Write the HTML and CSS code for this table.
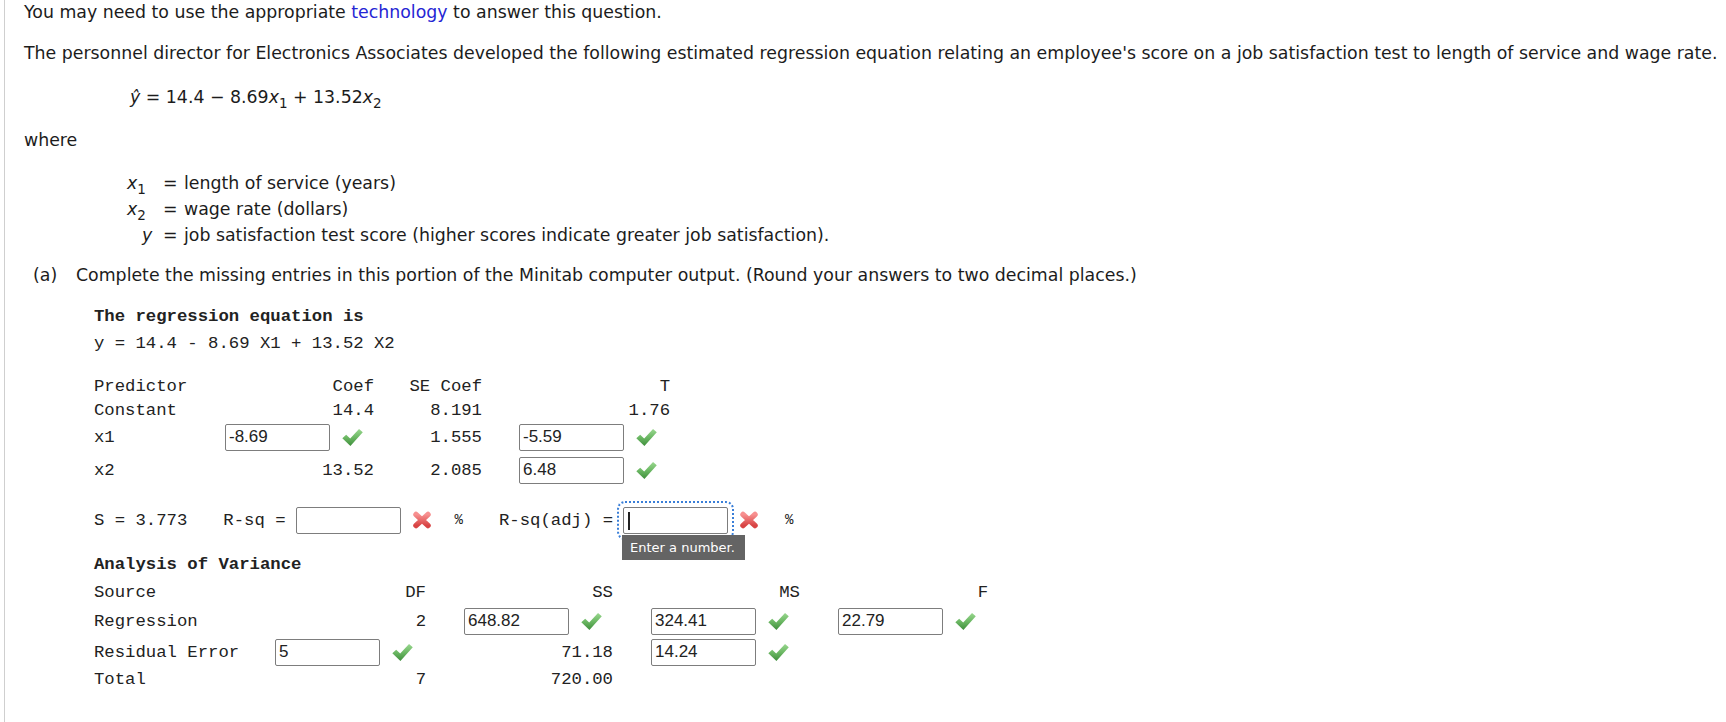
FILE: index.html
```html
<!DOCTYPE html>
<html lang="en">
<head>
<meta charset="utf-8">
<title>Regression question</title>
<link rel="stylesheet" href="styles.css">
</head>
<body>
<div class="page">
  <p class="intro">You may need to use the appropriate <a class="link" href="#">technology</a> to answer this question.</p>
  <p class="stmt">The personnel director for Electronics Associates developed the following estimated regression equation relating an employee's score on a job satisfaction test to length of service and wage rate.</p>
  <div class="eq"><i>ŷ</i> = 14.4 − 8.69<i>x</i><sub>1</sub> + 13.52<i>x</i><sub>2</sub></div>
  <p class="where">where</p>
  <div class="vars">
    <span class="v"><i>x</i><sub>1</sub></span><span>=</span><span>length of service (years)</span>
    <span class="v"><i>x</i><sub>2</sub></span><span>=</span><span>wage rate (dollars)</span>
    <span class="v vy"><i>y</i></span><span>=</span><span>job satisfaction test score (higher scores indicate greater job satisfaction).</span>
  </div>
  <div class="part"><span class="plabel">(a)</span><span>Complete the missing entries in this portion of the Minitab computer output. (Round your answers to two decimal places.)</span></div>

  <div class="mono">
    <div class="mtitle">The regression equation is</div>
    <div class="mline">y = 14.4 - 8.69 X1 + 13.52 X2</div>

    <div class="crow chead">
      <span>Predictor</span><span class="r">Coef</span><span class="r">SE Coef</span><span class="r tcol">T</span>
    </div>
    <div class="crow cconst">
      <span>Constant</span><span class="r">14.4</span><span class="r">8.191</span><span class="r tcol">1.76</span>
    </div>
    <div class="crow cin">
      <span>x1</span>
      <span class="cell"><input class="inp" type="text" value="-8.69"><svg class="ok" viewBox="0 0 20 18"><use href="#chk"/></svg></span>
      <span class="r">1.555</span>
      <span class="cell tcol"><input class="inp" type="text" value="-5.59"><svg class="ok" viewBox="0 0 20 18"><use href="#chk"/></svg></span>
    </div>
    <div class="crow cin c2">
      <span>x2</span>
      <span class="r">13.52</span>
      <span class="r">2.085</span>
      <span class="cell tcol"><input class="inp" type="text" value="6.48"><svg class="ok" viewBox="0 0 20 18"><use href="#chk"/></svg></span>
    </div>

    <div class="srow">
      <span>S = 3.773</span>
      <span class="rsq">R-sq =</span>
      <input class="inp ml10" type="text" value="">
      <svg class="bad" viewBox="0 0 20 18"><use href="#crs"/></svg>
      <span class="pct">%</span>
      <span class="rsqa">R-sq(adj) =</span>
      <span class="focus-wrap">
        <input class="inp focused" type="text" value="">
        <span class="caret"></span>
        <span class="tip">Enter a number.</span>
      </span>
      <svg class="bad" viewBox="0 0 20 18"><use href="#crs"/></svg>
      <span class="pct2">%</span>
    </div>

    <div class="mtitle aovt">Analysis of Variance</div>
    <div class="arow ahead">
      <span>Source</span><span class="r">DF</span><span class="r pcol">SS</span><span class="r pcol">MS</span><span class="r pcol">F</span>
    </div>
    <div class="arow ain">
      <span>Regression</span>
      <span class="r">2</span>
      <span class="cell pcol"><input class="inp" type="text" value="648.82"><svg class="ok" viewBox="0 0 20 18"><use href="#chk"/></svg></span>
      <span class="cell pcol"><input class="inp" type="text" value="324.41"><svg class="ok" viewBox="0 0 20 18"><use href="#chk"/></svg></span>
      <span class="cell pcol"><input class="inp" type="text" value="22.79"><svg class="ok" viewBox="0 0 20 18"><use href="#chk"/></svg></span>
    </div>
    <div class="arow ain">
      <span>Residual Error</span>
      <span class="cell"><input class="inp" type="text" value="5"><svg class="ok" viewBox="0 0 20 18"><use href="#chk"/></svg></span>
      <span class="r pcol">71.18</span>
      <span class="cell pcol"><input class="inp" type="text" value="14.24"><svg class="ok" viewBox="0 0 20 18"><use href="#chk"/></svg></span>
      <span></span>
    </div>
    <div class="arow atot">
      <span>Total</span><span class="r">7</span><span class="r pcol">720.00</span><span></span><span></span>
    </div>
  </div>
</div>

<svg class="defs" width="0" height="0" aria-hidden="true">
  <defs>
    <linearGradient id="gchk" x1="0" y1="0" x2="0" y2="1">
      <stop offset="0" stop-color="#9ad890"/>
      <stop offset="0.5" stop-color="#6cb864"/>
      <stop offset="1" stop-color="#3f8f3c"/>
    </linearGradient>
    <linearGradient id="gcrs" x1="0" y1="0" x2="0" y2="1">
      <stop offset="0" stop-color="#f79090"/>
      <stop offset="1" stop-color="#d84444"/>
    </linearGradient>
    <symbol id="chk" viewBox="0 0 20 18">
      <path d="M0.3 9.6 L4 6.3 L7.8 10 L16.2 0.8 L19.8 4 L8 17 Z" fill="url(#gchk)"/>
    </symbol>
    <symbol id="crs" viewBox="0 0 20 18">
      <path d="M4 3.5 L16 14.5 M16 3.5 L4 14.5" stroke="url(#gcrs)" stroke-width="5.5" stroke-linecap="round" fill="none"/>
    </symbol>
  </defs>
</svg>
</body>
</html>
```

FILE: styles.css
```css
html, body {
  margin: 0;
  padding: 0;
  background: #ffffff;
}

.page {
  margin-left: 4px;
  border-left: 1px solid #cfcfcf;
  height: 722px;
  box-sizing: border-box;
  padding: 2px 0 0 19px;
  font-family: "DejaVu Sans", Verdana, sans-serif;
  font-size: 17.35px;
  color: #1c1c1c;
  overflow: hidden;
}

p { margin: 0; }

.intro { line-height: 20px; }
.link { color: #2525d4; text-decoration: none; }
.stmt { margin-top: 21px; line-height: 20px; white-space: nowrap; }

.eq {
  margin-top: 24px;
  height: 20px;
  line-height: 20px;
  padding-left: 106px;
}
sub {
  font-size: 13.5px;
  vertical-align: -5px;
  line-height: 0;
}

.where { margin-top: 23px; line-height: 20px; }

.vars {
  margin-top: 20px;
  padding-left: 103px;
  display: grid;
  grid-template-columns: 36px 21px auto;
  grid-auto-rows: 26px;
  align-items: center;
  white-space: nowrap;
}
.vy { padding-left: 15px; }

.part {
  margin-top: 17px;
  line-height: 20px;
  padding-left: 9px;
  display: flex;
  white-space: nowrap;
}
.plabel { width: 43px; flex: none; }

/* Minitab output */
.mono {
  margin-top: 20px;
  padding-left: 70px;
  font-family: "Liberation Mono", "Courier New", monospace;
  font-size: 17.3px;
  color: #222;
  white-space: nowrap;
}
.mtitle { font-weight: bold; line-height: 24px; }
.mline { margin-top: 3px; line-height: 24px; }

.crow {
  display: grid;
  grid-template-columns: 131px 149px 108px 188px;
  align-items: center;
  height: 24px;
}
.tcol { padding-left: 37px; }
.chead { margin-top: 18px; }
.cconst { height: 25px; }
.cin { height: 28px; }
.c2 { margin-top: 5px; }

.r { text-align: right; }
.cell {
  display: flex;
  align-items: center;
  gap: 12px;
}

.inp {
  width: 105px;
  height: 27px;
  box-sizing: border-box;
  border: 1px solid #7d7d7d;
  border-radius: 2px;
  padding: 0 3px;
  margin: 0;
  font-family: "Liberation Sans", Arial, sans-serif;
  font-size: 17px;
  color: #222;
  background: #fff;
  flex: none;
}

.ok { width: 21px; height: 19px; flex: none; }
.bad { width: 20px; height: 18px; flex: none; margin-left: 11px; }

.srow {
  margin-top: 22px;
  height: 28px;
  display: flex;
  align-items: center;
}
.rsq { margin-left: 36px; }
.ml10 { margin-left: 10px; }
.pct { margin-left: 23px; font-size: 14px; }
.rsqa { margin-left: 36px; }
.pct2 { margin-left: 26px; font-size: 14px; }

.focus-wrap {
  position: relative;
  display: inline-flex;
  margin-left: 10px;
}
.focused {
  outline: 2px dotted #3a7fd8;
  outline-offset: 4px;
}
.caret {
  position: absolute;
  left: 5px;
  top: 5px;
  width: 2px;
  height: 18px;
  background: #222;
}
.tip {
  position: absolute;
  left: -1px;
  top: 28px;
  width: 123px;
  height: 25px;
  box-sizing: border-box;
  padding-left: 8px;
  background: #646464;
  color: #ffffff;
  font-family: "DejaVu Sans", Verdana, sans-serif;
  font-size: 13px;
  line-height: 25px;
  white-space: nowrap;
  z-index: 2;
}

.aovt { margin-top: 19px; }
.arow {
  display: grid;
  grid-template-columns: 181px 151px 187px 187px 188px;
  align-items: center;
  height: 24px;
}
.pcol { padding-left: 38px; }
.ahead { margin-top: 3px; }
.ain { height: 28px; margin-top: 3px; }
.atot { margin-top: 1px; }

.defs { position: absolute; width: 0; height: 0; overflow: hidden; }
```
